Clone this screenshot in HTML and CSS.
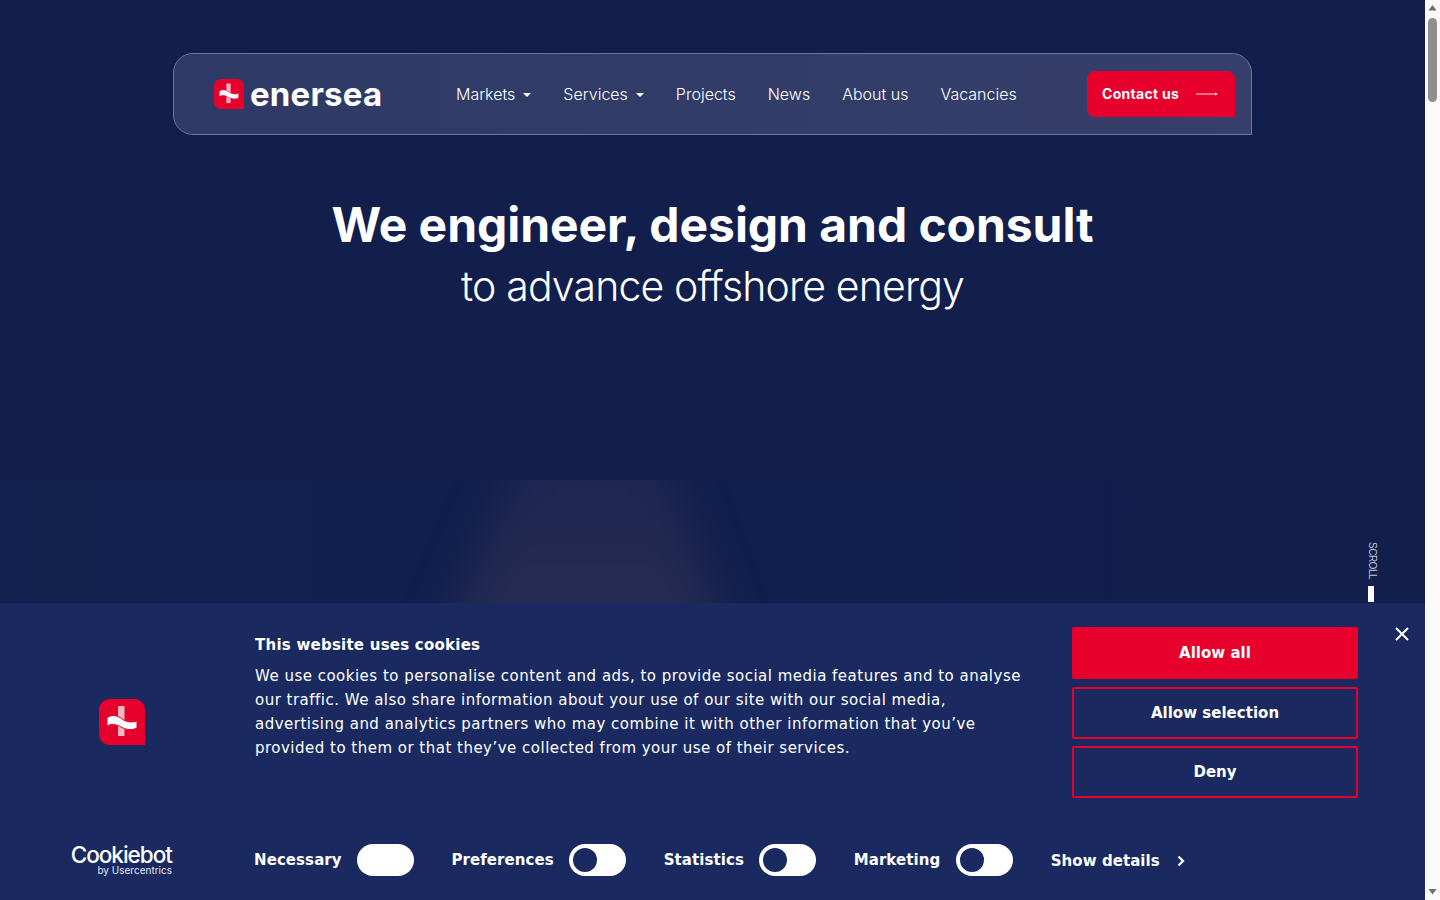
FILE: index.html
```html
<!DOCTYPE html>
<html lang="en">
<head>
  <meta charset="UTF-8">
  <meta name="viewport" content="width=device-width, initial-scale=1.0">
  <title>Enersea</title>
  <link rel="stylesheet" href="styles.css">
</head>
<body>
  <div class="page">
    <header class="site-header">
      <a class="logo" href="#">
        <svg class="logo-mark" viewBox="0 0 46 46" width="30" height="30">
          <path d="M11 0H35A11 11 0 0 1 46 11V46H11A11 11 0 0 1 0 35V11A11 11 0 0 1 11 0Z" fill="#e8002d"/>
          <rect x="19" y="7" width="6.500" height="30" fill="#f5b5c2"/>
          <path d="M8 19C12 15 18 16 23 20C28 23.500 33 23.500 38 22V29C33 31.500 27 31 22 28C17 25 12 24.500 8 27Z" fill="#fff" stroke="#e8002d" stroke-width="1"/>
        </svg>
        <span class="logo-text">enersea</span>
      </a>
      <nav class="main-nav">
        <a href="#">Markets<span class="caret"></span></a>
        <a href="#">Services<span class="caret"></span></a>
        <a href="#">Projects</a>
        <a href="#">News</a>
        <a href="#">About us</a>
        <a href="#">Vacancies</a>
      </nav>
      <a class="contact-btn" href="#">
        Contact us
        <svg viewBox="0 0 22 8" width="22" height="8"><path d="M0 4H20" stroke="#fff" stroke-width="1" opacity="0.85"/><path d="M19 2.500L22 4L19 5.500Z" fill="#fff"/></svg>
      </a>
    </header>

    <section class="hero">
      <h1>We engineer, design and consult</h1>
      <p>to advance offshore energy</p>
    </section>

    <div class="hero-strip"><div class="hero-glow"></div></div>

    <div class="scroll-hint">
      <span>SCROLL</span>
      <i></i>
    </div>

    <aside class="cookie-banner">
      <button class="cookie-close" aria-label="Close">
        <svg viewBox="0 0 14 14" width="14" height="14"><path d="M1 1L13 13M13 1L1 13" stroke="#fff" stroke-width="2"/></svg>
      </button>
      <div class="cookie-top">
        <div class="cookie-logo">
          <svg viewBox="0 0 46 46" width="46" height="46">
            <path d="M11 0H35A11 11 0 0 1 46 11V46H11A11 11 0 0 1 0 35V11A11 11 0 0 1 11 0Z" fill="#e8002d"/>
            <rect x="19" y="7" width="6.500" height="30" fill="#f5b5c2"/>
            <path d="M8 19C12 15 18 16 23 20C28 23.500 33 23.500 38 22V29C33 31.500 27 31 22 28C17 25 12 24.500 8 27Z" fill="#fff" stroke="#e8002d" stroke-width="1"/>
          </svg>
        </div>
        <div class="cookie-copy">
          <h2>This website uses cookies</h2>
          <p>We use cookies to personalise content and ads, to provide social media features and to analyse our traffic. We also share information about your use of our site with our social media, advertising and analytics partners who may combine it with other information that you’ve provided to them or that they’ve collected from your use of their services.</p>
        </div>
        <div class="cookie-actions">
          <button class="cookie-btn primary">Allow all</button>
          <button class="cookie-btn">Allow selection</button>
          <button class="cookie-btn">Deny</button>
        </div>
      </div>
      <div class="cookie-bottom">
        <div class="cookiebot">
          <span class="cb-name">Cookiebot</span>
          <span class="cb-by">by Usercentrics</span>
        </div>
        <div class="toggles">
          <label class="toggle-item">Necessary<span class="toggle on"></span></label>
          <label class="toggle-item">Preferences<span class="toggle"></span></label>
          <label class="toggle-item">Statistics<span class="toggle"></span></label>
          <label class="toggle-item">Marketing<span class="toggle"></span></label>
        </div>
        <a class="show-details" href="#">Show details
          <svg viewBox="0 0 8 12" width="8" height="12"><path d="M1.500 1.500L6 6L1.500 10.500" fill="none" stroke="#fff" stroke-width="2.200"/></svg>
        </a>
      </div>
    </aside>
  </div>

  <div class="scrollbar">
    <svg viewBox="0 0 15 15" width="15" height="15"><path d="M3.500 10.500L7.500 5L11.500 10.500Z" fill="#6e6e6e"/></svg>
    <div class="scroll-track"><div class="scroll-thumb"></div></div>
    <svg viewBox="0 0 15 15" width="15" height="15"><path d="M3.500 4L7.500 9.500L11.500 4Z" fill="#6e6e6e"/></svg>
  </div>
</body>
</html>
```

FILE: styles.css
```css
* {
  margin: 0;
  padding: 0;
  box-sizing: border-box;
}

html, body {
  height: 100%;
  overflow: hidden;
}

body {
  display: flex;
  background: #fafafa;
  font-family: 'Inter', 'Liberation Sans', sans-serif;
  color: #fff;
}

a {
  color: inherit;
  text-decoration: none;
}

.page {
  position: relative;
  flex: 1;
  min-width: 0;
  height: 100vh;
  overflow: hidden;
  background: #121e4c;
  padding-top: 53px;
}

.site-header {
  display: flex;
  align-items: center;
  width: 1079px;
  height: 82px;
  margin: 0 auto;
  padding: 0 16px 0 40px;
  background: linear-gradient(to right, #2f3966, #353f6a);
  border: 1px solid #6c759a;
  border-radius: 20px 20px 0 20px;
}

.logo {
  display: flex;
  align-items: center;
  gap: 6px;
  width: 242px;
}

.logo-text {
  font-size: 33px;
  font-weight: 700;
  letter-spacing: 0.2px;
  line-height: 1;
}

.main-nav {
  display: flex;
  flex: 1;
  gap: 32px;
  font-size: 16px;
  font-weight: 300;
}

.caret {
  display: inline-block;
  margin-left: 8px;
  vertical-align: 3px;
  border-top: 4px solid #fff;
  border-left: 4px solid transparent;
  border-right: 4px solid transparent;
}

.contact-btn {
  display: flex;
  align-items: center;
  justify-content: space-between;
  width: 148px;
  height: 46px;
  padding: 0 17px 2px 15px;
  background: #e8002d;
  border-radius: 8px 8px 0 8px;
  font-size: 14px;
  font-weight: 700;
  letter-spacing: 0.3px;
}

.contact-btn svg {
  margin-top: 2px;
}

.hero {
  margin-top: 61px;
  text-align: center;
}

.hero h1 {
  font-size: 48px;
  font-weight: 700;
  line-height: 58px;
  letter-spacing: -0.06px;
}

.hero p {
  margin-top: 6px;
  font-size: 41px;
  font-weight: 300;
  line-height: 52px;
  letter-spacing: -0.85px;
}

.hero-strip {
  position: absolute;
  left: 0;
  right: 0;
  top: 480px;
  height: 124px;
  overflow: hidden;
  background: linear-gradient(to right, #13204e 0, #11204f 15px, #12204e 42px, #11204f 285px, #101f4e 340px, #111f4e 800px, #121e4c 100%);
}

.hero-glow {
  position: absolute;
  left: 400px;
  top: -40px;
  width: 370px;
  height: 210px;
  filter: blur(20px);
}

.hero-glow::before {
  content: "";
  display: block;
  height: 100%;
  background:
    repeating-linear-gradient(to bottom, rgba(255, 255, 255, 0) 0 7px, rgba(255, 255, 255, 0.012) 7px 11px),
    linear-gradient(to bottom, #1d2552 15%, #23294f 60%, #252a55);
  clip-path: polygon(34% 0, 70% 0, 90% 100%, 10% 100%);
}

.scroll-hint {
  position: absolute;
  top: 542px;
  left: 1366px;
  display: flex;
  flex-direction: column;
  align-items: flex-start;
  gap: 7px;
  width: 12px;
}

.scroll-hint span {
  writing-mode: vertical-rl;
  font-family: 'Liberation Sans', sans-serif;
  font-size: 10px;
  line-height: 12px;
  letter-spacing: -0.5px;
  color: #c5c9d8;
}

.scroll-hint i {
  display: block;
  width: 6px;
  height: 16px;
  margin-left: 2px;
  background: #fff;
}

.cookie-banner {
  position: absolute;
  left: 0;
  right: 0;
  bottom: 0;
  height: 297px;
  background: #1a2a60;
  font-family: 'DejaVu Sans', sans-serif;
}

.cookie-close {
  position: absolute;
  top: 24px;
  right: 16px;
  width: 14px;
  height: 14px;
  background: none;
  border: none;
}

.cookie-top {
  display: flex;
  padding: 24px 67px 0 0;
}

.cookie-logo {
  display: flex;
  justify-content: center;
  align-items: center;
  width: 244px;
  height: 190px;
  flex-shrink: 0;
}

.cookie-copy {
  width: 828px;
  padding: 8px 32px 0 11px;
}

.cookie-copy h2 {
  font-size: 15px;
  font-weight: 700;
  line-height: 20px;
  letter-spacing: 0.24px;
  margin-bottom: 9px;
}

.cookie-copy p {
  font-size: 15px;
  line-height: 24px;
  letter-spacing: 0.49px;
}

.cookie-actions {
  display: flex;
  flex-direction: column;
  gap: 8px;
  width: 286px;
}

.cookie-btn {
  height: 52px;
  background: transparent;
  border: 2px solid #e8002d;
  border-radius: 2px;
  color: #fff;
  font-family: inherit;
  font-size: 15px;
  font-weight: 700;
  letter-spacing: 0.02px;
}

.cookie-btn:last-child {
  margin-top: -1px;
}

.cookie-btn.primary {
  background: #e8002d;
}

.cookie-bottom {
  display: flex;
  align-items: center;
  height: 34px;
  margin-top: 26px;
}

.cookiebot {
  display: flex;
  flex-direction: column;
  align-items: flex-end;
  width: 172px;
  font-family: 'Inter', sans-serif;
}

.cb-name {
  font-size: 22.500px;
  font-weight: 500;
  letter-spacing: -1px;
  line-height: 20px;
}

.cb-by {
  font-size: 10px;
  line-height: 10px;
  color: #e4e6f0;
}

.toggles {
  display: flex;
  align-items: center;
  margin-left: 82px;
  gap: 37.400px;
}

.toggle-item {
  display: flex;
  align-items: center;
  gap: 15.400px;
  font-size: 15px;
  font-weight: 700;
  letter-spacing: 0.08px;
}

.toggle {
  position: relative;
  display: block;
  width: 57px;
  height: 32px;
  background: #fff;
  border-radius: 16px;
}

.toggle::after {
  content: "";
  position: absolute;
  left: 4px;
  top: 4px;
  width: 24px;
  height: 24px;
  border-radius: 50%;
  background: #1a2a60;
}

.toggle.on::after {
  display: none;
}

.show-details {
  display: flex;
  align-items: center;
  gap: 17px;
  margin-left: 38px;
  padding-top: 2px;
  font-size: 15px;
  font-weight: 700;
  letter-spacing: 0.06px;
}

.scrollbar {
  display: flex;
  flex-direction: column;
  width: 15px;
  height: 100vh;
  flex-shrink: 0;
  background: #fafafa;
}

.scroll-track {
  flex: 1;
  padding: 3px 3px 0;
}

.scroll-thumb {
  height: 84px;
  border-radius: 5px;
  background: #8f8f8f;
}
```
